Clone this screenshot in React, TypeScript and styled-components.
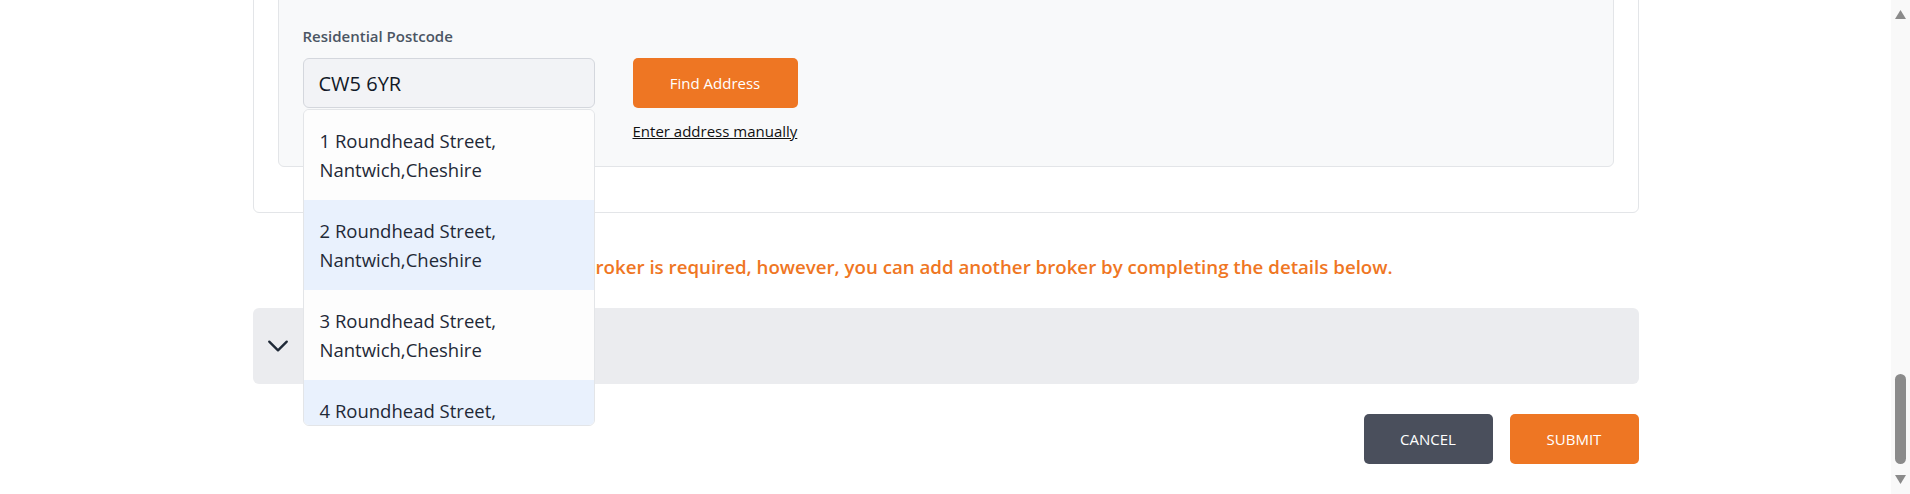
import styled, { createGlobalStyle } from "styled-components";

const GlobalStyle = createGlobalStyle`
    * {
        box-sizing: border-box;
    }
    body {
        margin: 0;
        background: #ffffff;
        font-family: "Open Sans", "Noto Sans", sans-serif;
        color: #1f2937;
    }
`;

const Page = styled.div`
    display: flex;
    height: 494px;
    overflow: hidden;
`;

const Main = styled.main`
    flex: 1;
    display: flex;
    flex-direction: column;
    justify-content: flex-end;
    align-items: center;
    padding-bottom: 30px;
    overflow: hidden;
`;

const Container = styled.div`
    width: 1386px;
    flex-shrink: 0;
`;

const Card = styled.section`
    background: #ffffff;
    border: 1px solid #e3e5e8;
    border-radius: 6px;
    padding: 24px 24px 45px;
`;

const AddressPanel = styled.div`
    background: #f8f9fa;
    border: 1px solid #e3e5e8;
    border-radius: 6px;
    padding: 48px 24px 23px;
`;

const Label = styled.label`
    display: block;
    font-size: 15px;
    font-weight: 600;
    color: #4b5563;
    line-height: 20px;
    margin-bottom: 12px;
`;

const FieldRow = styled.div`
    display: flex;
    align-items: flex-start;
    gap: 38px;
`;

const PostcodeField = styled.div`
    position: relative;
    width: 292px;
`;

const Input = styled.input`
    width: 100%;
    height: 50px;
    background: #f2f3f6;
    border: 1px solid #d4d7dd;
    border-radius: 6px;
    padding: 0 15px;
    font-family: inherit;
    font-size: 20px;
    color: #111827;
    outline: none;
`;

const Suggestions = styled.ul`
    position: absolute;
    top: calc(100% + 1px);
    left: 0;
    width: 100%;
    height: 317px;
    margin: 0;
    padding: 0;
    list-style: none;
    background: #fdfdfd;
    border: 1px solid #e3e5e8;
    border-radius: 6px;
    overflow-y: auto;
    z-index: 10;

    &::-webkit-scrollbar {
        width: 6px;
    }
    &::-webkit-scrollbar-track {
        background: transparent;
    }
    &::-webkit-scrollbar-thumb {
        background: #cdd3da;
        border-radius: 3px;
    }
`;

const Suggestion = styled.li<{ $alt: boolean }>`
    padding: 16px 16px;
    font-size: 18.5px;
    line-height: 29px;
    color: #1f2937;
    background: ${(p) => (p.$alt ? "#e9f1fd" : "#fdfdfd")};
    white-space: nowrap;
    cursor: pointer;
`;

const ActionColumn = styled.div`
    display: flex;
    flex-direction: column;
    align-items: flex-start;
    gap: 11px;
`;

const Button = styled.button<{ $variant: "primary" | "dark" }>`
    height: 50px;
    border: none;
    border-radius: 5px;
    background: ${(p) => (p.$variant === "primary" ? "#ee7623" : "#4a4f5c")};
    color: #ffffff;
    font-family: inherit;
    font-size: 15px;
    cursor: pointer;
`;

const FindButton = styled(Button)`
    width: 165px;
`;

const ManualLink = styled.a`
    font-size: 15px;
    line-height: 24px;
    color: #111111;
    text-decoration: underline;
    cursor: pointer;
`;

const Notice = styled.p`
    margin: 42px 0 0;
    text-align: center;
    font-size: 18.7px;
    font-weight: 600;
    line-height: 24px;
    color: #ef7623;
`;

const AccordionBar = styled.div`
    margin-top: 29px;
    height: 76px;
    background: #ebecef;
    border-radius: 6px;
    display: flex;
    align-items: center;
    padding-left: 11px;
    color: #1f2937;
`;

const Actions = styled.div`
    margin-top: 30px;
    display: flex;
    justify-content: flex-end;
    gap: 17px;
`;

const ActionButton = styled(Button)`
    width: 129px;
    text-transform: uppercase;
`;

const ScrollTrack = styled.div`
    width: 19px;
    flex-shrink: 0;
    background: #f9f9f9;
    display: flex;
    flex-direction: column;
    align-items: center;
    padding: 10px 0;
`;

const Spacer = styled.div`
    flex: 1;
`;

const ScrollThumb = styled.div`
    width: 11px;
    height: 90px;
    border-radius: 6px;
    background: #8b8b8b;
    margin-bottom: 11px;
`;

const addresses = [1, 2, 3, 4, 5, 6, 7].map((n) => ({
    street: `${n} Roundhead Street,`,
    town: "Nantwich,Cheshire",
}));

const Arrow = ({ up }: { up: boolean }) => (
    <svg width="11" height="9" viewBox="0 0 11 9">
        <polygon points={up ? "5.5,0 11,9 0,9" : "0,0 11,0 5.5,9"} fill="#8b8b8b" />
    </svg>
);

export default function App() {
    return (
        <>
            <GlobalStyle />
            <Page>
                <Main>
                    <Container>
                        <Card>
                            <AddressPanel>
                                <Label>Residential Postcode</Label>
                                <FieldRow>
                                    <PostcodeField>
                                        <Input defaultValue="CW5 6YR" />
                                        <Suggestions>
                                            {addresses.map((a, i) => (
                                                <Suggestion key={a.street} $alt={i % 2 === 1}>
                                                    {a.street}
                                                    <br />
                                                    {a.town}
                                                </Suggestion>
                                            ))}
                                        </Suggestions>
                                    </PostcodeField>
                                    <ActionColumn>
                                        <FindButton $variant="primary">Find Address</FindButton>
                                        <ManualLink>Enter address manually</ManualLink>
                                    </ActionColumn>
                                </FieldRow>
                            </AddressPanel>
                        </Card>

                        <Notice>
                            Only one broker is required, however, you can add another broker by completing the details below.
                        </Notice>

                        <AccordionBar>
                            <svg width="28" height="28" viewBox="0 0 24 24" fill="none" stroke="currentColor" strokeWidth="2" strokeLinecap="round" strokeLinejoin="round">
                                <path d="m19.5 8.25-7.5 7.5-7.5-7.5" />
                            </svg>
                        </AccordionBar>

                        <Actions>
                            <ActionButton $variant="dark">Cancel</ActionButton>
                            <ActionButton $variant="primary">Submit</ActionButton>
                        </Actions>
                    </Container>
                </Main>
                <ScrollTrack>
                    <Arrow up />
                    <Spacer />
                    <ScrollThumb />
                    <Arrow up={false} />
                </ScrollTrack>
            </Page>
        </>
    );
}
